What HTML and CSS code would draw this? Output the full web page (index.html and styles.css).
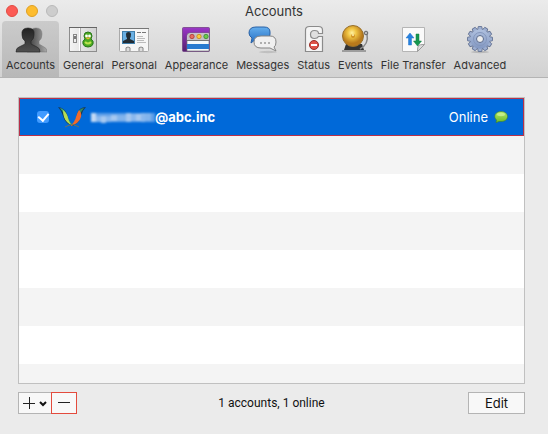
FILE: index.html
```html
<!DOCTYPE html>
<html lang="en">
<head>
<meta charset="utf-8">
<meta name="viewport" content="width=device-width, initial-scale=1">
<title>Accounts</title>
<link rel="stylesheet" href="styles.css">
</head>
<body>
<header class="chrome">
  <div class="titlebar">
    <div class="lights">
      <button class="light close" aria-label="Close"></button>
      <button class="light minimize" aria-label="Minimize"></button>
      <button class="light zoom" aria-label="Zoom" disabled></button>
    </div>
    <h1 class="title">Accounts</h1>
  </div>
  <nav class="toolbar">
    <button class="tab active">
      <svg class="icon" viewBox="0 0 32 30" aria-hidden="true">
        <defs><linearGradient id="man" x2="0" y2="1"><stop stop-color="#222"/><stop offset="1" stop-color="#505050"/></linearGradient><linearGradient id="shade"><stop stop-color="#333"/><stop offset="1" stop-color="#aaa"/></linearGradient></defs>
        <path d="M15 10q0-6 6-6t6 6q0 5-3 7v3l5 3q3 1 3 5H12z" fill="url(#shade)" stroke="#777" stroke-width=".5"/>
        <path d="M7 11q-1-7 6-7t6 7q0 4-3 6v3l6 3q3 1 3 5H1q0-4 3-5l6-3v-3q-3-2-3-6z" fill="url(#man)" stroke="#222" stroke-width=".6"/>
      </svg>
      <span>Accounts</span>
    </button>
    <button class="tab">
      <svg class="icon" viewBox="0 0 32 30" aria-hidden="true">
        <defs><linearGradient id="plate"><stop stop-color="#f4f4f4"/><stop offset="1" stop-color="#d2d2d2"/></linearGradient></defs>
        <rect x="2.500" y="3.500" width="27" height="24" fill="url(#plate)" stroke="#8d8d8d"/>
        <path d="M2 3.500h28" stroke="#666"/><path d="M13.500 4v23" stroke="#aaa"/><path d="M12.500 4v23" stroke="#fff"/>
        <rect x="6.500" y="10.500" width="3" height="8" fill="#eee" stroke="#888"/><path d="M8 12v3" stroke="#555" stroke-width="1.500"/>
        <path d="M21 8q4 0 4 4l-1 3q3 2 2 5-1 3-5 3t-5-3q-1-3 2-5l-1-3q0-4 4-4z" fill="#4caa22" stroke="#28751b"/>
        <circle cx="19.500" cy="12" r="1.400" fill="#fff"/><circle cx="22.500" cy="12" r="1.400" fill="#fff"/><path d="M18 13.500h6l-3 2z" fill="#f0b438"/><path d="M18 18q3 3 6 0" stroke="#bde34f" stroke-width="2" fill="none"/>
      </svg>
      <span>General</span>
    </button>
    <button class="tab">
      <svg class="icon" viewBox="0 0 32 30" aria-hidden="true">
        <rect x="1.500" y="4.500" width="29" height="23" rx="1" fill="#f6f6f6" stroke="#aaa"/>
        <path d="M1 4.500h30" stroke="#777"/><rect x="4.500" y="7.500" width="12" height="12" fill="#69afe3" stroke="#407eab"/>
        <path d="M8 10q0-2 2.500-2T13 10q0 3-1 4v1l4 2v2H5v-2l4-2v-1q-1-1-1-4z" fill="#222c34"/>
        <path d="M19 8.500h4m1 0h4" stroke="#777"/><path d="M19 12.500h6m-6 2h8m-8 2h7m-7 2h9" stroke="#bbb"/>
        <path d="M8 27v-1q-1-3 2-3t2 3v1M21 27v-1q-1-3 2-3t2 3v1" fill="#ddd" stroke="#888"/>
      </svg>
      <span>Personal</span>
    </button>
    <button class="tab">
      <svg class="icon" viewBox="0 0 32 30" aria-hidden="true">
        <defs><linearGradient id="purple" x2="0" y2="1"><stop stop-color="#9b36c7"/><stop offset="1" stop-color="#54206d"/></linearGradient></defs>
        <rect x="2.500" y="3.500" width="27" height="24" rx="1" fill="url(#purple)" stroke="#724285" stroke-width=".8"/>
        <path d="M7 12q0-3 3-3h19v18H7z" fill="#f5f8fa" stroke="#777" stroke-width=".7"/><path d="M7.500 12q0-2.500 2.500-2.500h19V16H7.500z" fill="#c4bfc6"/>
        <circle cx="12" cy="12.500" r="2.200" fill="#e96b60" stroke="#a3302d" stroke-width=".7"/><circle cx="19" cy="12.500" r="2.200" fill="#f8cc3d" stroke="#c47715" stroke-width=".7"/><circle cx="26" cy="12.500" r="2.200" fill="#6bc849" stroke="#2d812e" stroke-width=".7"/>
        <path d="M7 20h22v5H7z" fill="#287ad0"/><path d="M7 16.500h22" stroke="#777"/>
      </svg>
      <span>Appearance</span>
    </button>
    <button class="tab">
      <svg class="icon" viewBox="0 0 32 30" aria-hidden="true">
        <defs><linearGradient id="blue" x2="0" y2="1"><stop stop-color="#65aeed"/><stop offset="1" stop-color="#246fc3"/></linearGradient></defs>
        <ellipse cx="21" cy="28" rx="9" ry="1.200" fill="#999" opacity=".4"/>
        <path d="M9 3h8q6 0 6 5v2q0 5-6 5h-8l-5 4 1-5q-3-2-3-5 0-6 7-6z" fill="url(#blue)" stroke="#2860a5"/>
        <path d="M14 12h9q6 0 6 6 0 4-2 5l2 4-6-3h-9q-7 0-7-6t7-6z" fill="#f0f0f0" stroke="#858585"/>
        <path d="M13 19h2m2 0h2m2 0h2" stroke="#999" stroke-width="1.600"/>
      </svg>
      <span>Messages</span>
    </button>
    <button class="tab">
      <svg class="icon" viewBox="0 0 32 30" aria-hidden="true">
        <path d="M7.500 6q0-3.500 4-3.500h9q4 0 4 3.500v3.500h-4q0-3-4-3-4 0-4 4t4 4q3 0 4-2h4v15h-17z" fill="#f4f4f4" stroke="#8b8b8b" stroke-width="1.200"/>
        <circle cx="16" cy="21" r="4.500" fill="#df5247" stroke="#993029"/><path d="M13 21h6" stroke="#fff" stroke-width="2"/>
      </svg>
      <span>Status</span>
    </button>
    <button class="tab">
      <svg class="icon" viewBox="0 0 32 30" aria-hidden="true">
        <defs><radialGradient id="gold" cx=".45" cy=".35"><stop stop-color="#fff1a0"/><stop offset=".4" stop-color="#f0c443"/><stop offset="1" stop-color="#b8791b"/></radialGradient></defs>
        <path d="M7 20h16l2 6H5z" fill="#333"/><path d="M3 27h24" stroke="#888" stroke-width="1.500"/>
        <path d="M28 10q2 10-7 15" fill="none" stroke="#888" stroke-width="1.500"/><circle cx="27" cy="9" r="1.800" fill="#bbb" stroke="#666"/>
        <circle cx="14" cy="12" r="10.500" fill="url(#gold)" stroke="#98702b"/><circle cx="14" cy="12" r="2" fill="#d19427"/><circle cx="14" cy="11" r="1" fill="#fff3b1"/>
      </svg>
      <span>Events</span>
    </button>
    <button class="tab">
      <svg class="icon" viewBox="0 0 32 30" aria-hidden="true">
        <path d="M5.500 3.500h22v17l-7 7h-15z" fill="#fafafa" stroke="#b5b5b5"/><path d="M27.500 20.500q-5 0-6 1t-1 6z" fill="#ddd" stroke="#999"/>
        <path d="M13 9l4 5h-2.500v7h-3v-7H9z" fill="#2681df" stroke="#2476cb" stroke-width=".5"/><path d="M20.500 22l4-5H22v-7h-3v7h-2.500z" fill="#169650" stroke="#127e42" stroke-width=".5"/>
      </svg>
      <span>File Transfer</span>
    </button>
    <button class="tab">
      <svg class="icon" viewBox="0 0 32 30" aria-hidden="true">
        <defs><linearGradient id="steel" x2="0" y2="1"><stop stop-color="#b0c1df"/><stop offset="1" stop-color="#8297c1"/></linearGradient></defs>
        <ellipse cx="16" cy="28" rx="9" ry="1.200" fill="#888" opacity=".4"/>
        <g fill="#9eafd0" stroke="#5a6a8c" stroke-width=".8"><path id="tooth" d="M13.500 6l.8-3.500h3.400l.8 3.500v18l-.8 3.500h-3.400l-.8-3.500z"/><use href="#tooth" transform="rotate(30 16 15)"/><use href="#tooth" transform="rotate(60 16 15)"/><use href="#tooth" transform="rotate(90 16 15)"/><use href="#tooth" transform="rotate(120 16 15)"/><use href="#tooth" transform="rotate(150 16 15)"/></g>
        <circle cx="16" cy="15" r="9.800" fill="url(#steel)"/><circle cx="16" cy="15" r="6.500" fill="none" stroke="#8497bd"/><circle cx="16" cy="15" r="3.500" fill="#eee" stroke="#5a6a8c"/>
      </svg>
      <span>Advanced</span>
    </button>
  </nav>
</header>
<main class="content">
  <ul class="accounts">
    <li class="account selected">
      <input class="check" type="checkbox" id="account" checked>
      <label class="identity" for="account">
        <svg class="logo" viewBox="0 0 30 24" aria-hidden="true">
          <path d="M1 2q7 1 9 7 2 8 6 12-8-2-10-10Q4 5 1 2z" fill="#173c58"/><path d="M3 3q5 1 7 7t6 11q-7-3-9-10Q6 6 3 3z" fill="#36a477"/><path d="M6 5q4 3 5 8t5 8q-7-3-9-9-1-4-1-7z" fill="#b9dc53"/>
          <path d="M29 2q-7 0-9 7-1 8-6 12 8-2 10-10 1-5 5-9z" fill="#173c58"/><path d="M27 3q-6 1-7 7-1 7-6 11 8-3 9-10 1-5 4-8z" fill="#328d62"/><path d="M22 5q3 3 2 7-2 7-11 9 5-4 6-9 1-4 3-7z" fill="#f06a2b"/><path d="M8 22l7-3 7 3" fill="none" stroke="#697261"/>
        </svg>
        <svg class="redacted" viewBox="0 0 64 12" aria-hidden="true">
          <path d="M0 2h64v9H0z" fill="#5c9de8"/><path d="M0 2h5v9H0z" fill="#c3d9f4"/><path d="M5 5h5v6H5zM15 5h5v6h-5zM40 3h5v7h-5zM50 2h4v9h-4z" fill="#8ab8ee"/><path d="M10 5h5v7h-5zM20 4h6v6h-6zM35 2h5v9h-5zM45 3h5v7h-5z" fill="#a6c8f0"/><path d="M26 4h9v6h-9zM54 2h6v8h-6z" fill="#82b4ec"/>
        </svg>
        <strong>@abc.inc</strong>
      </label>
      <span class="status">Online</span>
      <svg class="bubble" viewBox="0 0 14 12" aria-hidden="true"><defs><linearGradient id="lime" x2="0" y2="1"><stop stop-color="#b4e86b"/><stop offset="1" stop-color="#6ab927"/></linearGradient></defs><path d="M7 .5c3.800 0 6.500 2 6.500 5S10.800 10.500 7 10.500H5L2 11.700l.5-2.700C-1 6 1 .5 7 .5z" fill="url(#lime)" stroke="#398030" stroke-width=".6"/><ellipse cx="7" cy="3.500" rx="4" ry="1.700" fill="#d4f59b" opacity=".7"/></svg>
    </li>
  </ul>
  <footer class="actions">
    <div class="pair">
      <button class="button add" aria-label="Add account"><svg class="addmark" viewBox="0 0 24 12" aria-hidden="true"><path d="M0 6.500h12M6.500 0v12" stroke="#222"/><path d="M17 5l3 3 3-3" fill="none" stroke="#111" stroke-width="2"/></svg></button>
      <button class="button remove" aria-label="Remove account"><svg class="minus" viewBox="0 0 12 12" aria-hidden="true"><path d="M0 5.500h12" stroke="#222"/></svg></button>
    </div>
    <p class="summary">1 accounts, 1 online</p>
    <button class="button edit">Edit</button>
  </footer>
</main>
</body>
</html>
```

FILE: styles.css
```css
* { box-sizing: border-box; }
body { margin: 0; min-height: 100vh; display: flex; flex-direction: column; background: #ebebeb; color: #222; font-family: Inter, "Liberation Sans", sans-serif; }
button { margin: 0; padding: 0; border: 0; background: none; color: inherit; font: inherit; }
.chrome { background: linear-gradient(#ebebeb, #d2d2d2); border-bottom: 1px solid #b4b4b4; }
.titlebar { height: 21px; display: grid; grid-template-columns: 1fr auto 1fr; align-items: center; padding: 0 6px; }
.lights { display: flex; gap: 8px; }
.light { width: 12px; height: 12px; border: 1px solid #e24b42; border-radius: 50%; background: #fc5b55; }
.minimize { background: #fdbc2e; border-color: #dfa023; }
.zoom { background: #cdcdcd; border-color: #b9b9b9; }
.title { margin: 0; font-size: 13px; line-height: 20px; font-weight: 400; color: #333; }
.toolbar { display: flex; padding-left: 2px; }
.tab { display: flex; flex-direction: column; align-items: center; gap: 4px; padding: 3px 4px 4px; border-radius: 4px 4px 0 0; font-size: 11px; line-height: 15px; color: #333; white-space: nowrap; }
.tab.active { background: linear-gradient(#cbcbcb, #b8b8b8); }
.icon { width: 32px; height: 30px; }
.content { flex: 1; display: flex; flex-direction: column; padding: 19px 23px 20px 18px; }
.accounts { flex: 1; margin: 0; padding: 0; list-style: none; border: 1px solid #c0c0c0; background: repeating-linear-gradient(#fff 0 38px, #f4f4f4 38px 76px); }
.account { display: flex; align-items: center; height: 38px; padding: 0 15px 0 17px; }
.selected { background: #0069d9; border: 1px solid #b8304a; color: #fff; }
.check { appearance: none; width: 12px; height: 12px; margin: 0 8px 0 0; border-radius: 3px; background: #409bff; display: grid; place-items: center; }
.check:checked::before { content: ""; width: 5px; height: 8px; margin-bottom: 2px; border: solid #fff; border-width: 0 2px 2px 0; transform: rotate(40deg); }
.identity { flex: 1; display: flex; align-items: center; font-size: 13px; }
.logo { width: 30px; height: 24px; margin-right: 4px; }
.redacted { width: 64px; height: 12px; filter: blur(1px); }
.status { font-size: 13px; margin-right: 6px; }
.bubble { width: 14px; height: 12px; }
.actions { display: grid; grid-template-columns: 1fr auto 1fr; align-items: center; margin-top: 8px; }
.pair { display: flex; }
.button { height: 22px; display: flex; align-items: center; justify-content: center; border: 1px solid #b4b4b4; background: #f8f8f8; }
.add { width: 33px; border-right: 0; }
.addmark { width: 24px; height: 12px; }
.remove { width: 26px; border: 1px solid #e34b3d; }
.minus { width: 12px; height: 12px; }
.summary { margin: 0; font-family: Roboto, "Liberation Sans", sans-serif; font-size: 12px; line-height: 16px; color: #111; }
.edit { width: 57px; justify-self: end; font-size: 13px; color: #111; }
```
